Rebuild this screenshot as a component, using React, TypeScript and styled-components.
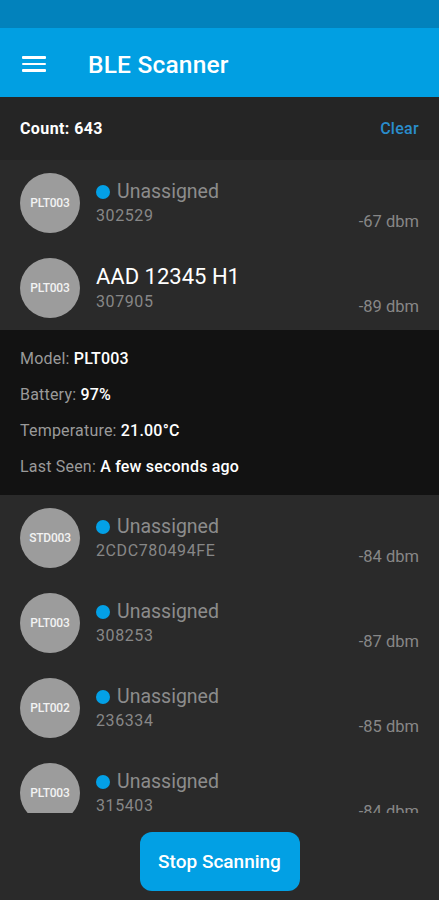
import React from "react";
import styled, { createGlobalStyle } from "styled-components";

const Global = createGlobalStyle`
  html, body { margin: 0; padding: 0; background: #2a2a2a; }
  body { font-family: Roboto, "Noto Sans", sans-serif; }
  * { box-sizing: border-box; }
`;

const Screen = styled.div`
  width: 439px;
  height: 900px;
  display: flex;
  flex-direction: column;
  background: #2a2a2a;
  overflow: hidden;
`;

const StatusBar = styled.div`
  height: 28px;
  background: #0282bc;
  flex: none;
`;

const AppBar = styled.header`
  height: 69px;
  background: #019fe2;
  display: flex;
  align-items: center;
  padding-left: 22px;
  padding-top: 3px;
  flex: none;
`;

const Burger = styled.div`
  width: 24px;
  display: flex;
  flex-direction: column;
  gap: 4px;
  span {
    display: block;
    height: 2.5px;
    background: #fff;
    border-radius: 1px;
  }
`;

const Title = styled.h1`
  margin: 0 0 0 42px;
  color: #fff;
  font-size: 24.5px;
  font-weight: 500;
  letter-spacing: 0.2px;
`;

const CountBar = styled.div`
  height: 63px;
  background: #252525;
  display: flex;
  align-items: center;
  justify-content: space-between;
  padding: 0 20px;
  flex: none;
`;

const Count = styled.span`
  color: #fff;
  font-size: 16px;
  font-weight: 700;
  letter-spacing: 0.4px;
`;

const ClearBtn = styled.span`
  color: #2a8dcc;
  font-size: 16px;
  font-weight: 500;
  letter-spacing: 0.3px;
`;

const List = styled.div`
  height: 653px;
  overflow: hidden;
  flex: none;
`;

const Row = styled.div`
  height: 85px;
  display: flex;
  align-items: center;
  padding: 0 20px;
`;

const Avatar = styled.div`
  width: 60px;
  height: 60px;
  border-radius: 50%;
  background: #9c9c9c;
  color: #f2f2f2;
  font-size: 12px;
  font-weight: 500;
  display: flex;
  align-items: center;
  justify-content: center;
  flex: none;
  letter-spacing: -0.2px;
`;

const Info = styled.div`
  margin-left: 16px;
  flex: 1;
  display: flex;
  flex-direction: column;
`;

const NameLine = styled.div<{ $assigned?: boolean }>`
  display: flex;
  align-items: center;
  height: ${(p) => (p.$assigned ? "26px" : "24px")};
`;

const Dot = styled.span`
  width: 14px;
  height: 14px;
  border-radius: 50%;
  background: #03a0e6;
  margin-right: 7px;
  flex: none;
`;

const Name = styled.span<{ $assigned?: boolean }>`
  color: ${(p) => (p.$assigned ? "#ffffff" : "#8c8c8c")};
  font-size: ${(p) => (p.$assigned ? "22px" : "19.5px")};
  font-weight: 400;
`;

const Sub = styled.div`
  color: #878787;
  font-size: 16px;
  letter-spacing: 0.6px;
  line-height: 20px;
  margin-top: 2px;
`;

const Rssi = styled.div`
  align-self: flex-end;
  padding-bottom: 13px;
  color: #878787;
  font-size: 16.5px;
  line-height: 20px;
`;

const Details = styled.div`
  background: #121212;
  padding: 11px 20px 10px;
  height: 165px;
`;

const DetailLine = styled.div`
  line-height: 36px;
  font-size: 16px;
  letter-spacing: 0.2px;
  color: #9a9a9a;
  b {
    color: #fff;
    font-weight: 500;
  }
`;

const Footer = styled.div`
  flex: 1;
  display: flex;
  justify-content: center;
  padding-top: 19px;
`;

const StopButton = styled.button`
  width: 160px;
  height: 59px;
  border: none;
  border-radius: 12px;
  background: #02a0e4;
  color: #fff;
  font-family: Roboto, sans-serif;
  font-size: 19px;
  font-weight: 500;
`;

type Device = { model: string; name?: string; id: string; rssi: number };

const devices: Device[] = [
  { model: "PLT003", id: "302529", rssi: -67 },
  { model: "PLT003", name: "AAD 12345 H1", id: "307905", rssi: -89 },
  { model: "STD003", id: "2CDC780494FE", rssi: -84 },
  { model: "PLT003", id: "308253", rssi: -87 },
  { model: "PLT002", id: "236334", rssi: -85 },
  { model: "PLT003", id: "315403", rssi: -84 },
];

const DeviceRow = ({ d }: { d: Device }) => (
  <Row>
    <Avatar>{d.model}</Avatar>
    <Info>
      <NameLine $assigned={!!d.name}>
        {!d.name && <Dot />}
        <Name $assigned={!!d.name}>{d.name ?? "Unassigned"}</Name>
      </NameLine>
      <Sub>{d.id}</Sub>
    </Info>
    <Rssi>{d.rssi} dbm</Rssi>
  </Row>
);

export default function App() {
  return (
    <Screen>
      <Global />
      <StatusBar />
      <AppBar>
        <Burger>
          <span />
          <span />
          <span />
        </Burger>
        <Title>BLE Scanner</Title>
      </AppBar>
      <CountBar>
        <Count>Count: 643</Count>
        <ClearBtn>Clear</ClearBtn>
      </CountBar>
      <List>
        <DeviceRow d={devices[0]} />
        <DeviceRow d={devices[1]} />
        <Details>
          <DetailLine>
            Model: <b>PLT003</b>
          </DetailLine>
          <DetailLine>
            Battery: <b>97%</b>
          </DetailLine>
          <DetailLine>
            Temperature: <b>21.00°C</b>
          </DetailLine>
          <DetailLine>
            Last Seen: <b>A few seconds ago</b>
          </DetailLine>
        </Details>
        {devices.slice(2).map((d, i) => (
          <DeviceRow key={i} d={d} />
        ))}
      </List>
      <Footer>
        <StopButton>Stop Scanning</StopButton>
      </Footer>
    </Screen>
  );
}
